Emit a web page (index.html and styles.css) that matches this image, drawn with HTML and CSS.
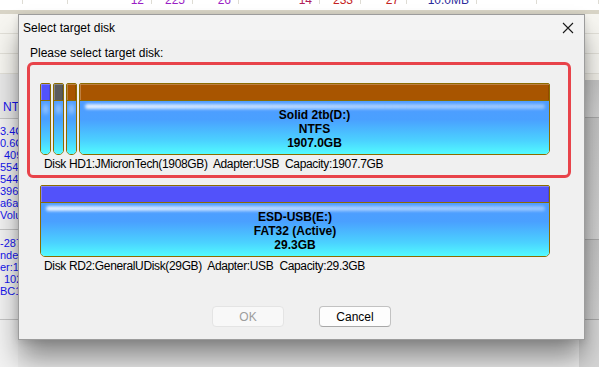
FILE: index.html
```html
<!DOCTYPE html>
<html>
<head>
  <meta charset="utf-8">
  <title>Select target disk</title>
  <link rel="stylesheet" href="styles.css">
</head>
<body>

<div class="app">
  <div class="top-grid">
    <div class="row row-cut">
      <span class="cell w23"></span>
      <span class="cell w45"></span>
      <span class="cell w84 c-purple">12</span>
      <span class="cell w41 c-purple">225</span>
      <span class="cell w46 c-purple">26</span>
      <span class="cell w81 c-wine">14</span>
      <span class="cell w41 c-red">233</span>
      <span class="cell w46 c-red">27</span>
      <span class="cell w70 c-navy">10.0MB</span>
      <span class="cell w60"></span>
      <span class="cell w62"></span>
    </div>
    <div class="band"></div>
    <div class="row"></div>
    <div class="row"></div>
    <div class="row"></div>
  </div>

  <div class="main">
    <div class="side">
      <div class="side-head">NTF</div>
      <div class="side-block">
        <div>3.4G</div>
        <div>0.6G</div>
        <div class="ind">409</div>
        <div>5543</div>
        <div>5446</div>
        <div>3961</div>
        <div>a6a-</div>
        <div>Volu</div>
      </div>
      <div class="side-block last">
        <div>-287</div>
        <div>nder</div>
        <div>er:14</div>
        <div class="ind">102</div>
        <div>BC1</div>
      </div>
    </div>
    <div class="middle"></div>
    <div class="strip">
      <div class="strip-top"></div>
      <div class="strip-part"></div>
      <div class="strip-part mid"></div>
      <div class="strip-part short"></div>
      <div class="strip-part rest"></div>
    </div>
  </div>
</div>

<!-- modal dialog on top of the app -->
<div class="dialog">
  <div class="titlebar">
    <span>Select target disk</span>
    <svg class="close" width="12" height="12" viewBox="0 0 12 12">
      <path d="M1 1 L11 11 M11 1 L1 11" stroke="#1a1a1a" stroke-width="1.1" fill="none"/>
    </svg>
  </div>

  <div class="dlg-body">
    <div class="label">Please select target disk:</div>

    <div class="disk selected">
      <div class="disk-bar">
        <div class="part narrow">
          <div class="cap cap-blue"></div>
          <div class="fill"></div>
        </div>
        <div class="part narrow">
          <div class="cap cap-gray"></div>
          <div class="fill"></div>
        </div>
        <div class="part narrow">
          <div class="cap cap-brown"></div>
          <div class="fill"></div>
        </div>
        <div class="part wide">
          <div class="cap cap-brown"></div>
          <div class="fill">
            <div class="part-text">
              <div>Solid 2tb(D:)</div>
              <div>NTFS</div>
              <div>1907.0GB</div>
            </div>
          </div>
        </div>
      </div>
      <div class="disk-info">Disk HD1:JMicronTech(1908GB)  Adapter:USB  Capacity:1907.7GB</div>
    </div>

    <div class="disk">
      <div class="disk-bar">
        <div class="part wide">
          <div class="cap cap-blue"></div>
          <div class="fill">
            <div class="part-text">
              <div>ESD-USB(E:)</div>
              <div>FAT32 (Active)</div>
              <div>29.3GB</div>
            </div>
          </div>
        </div>
      </div>
      <div class="disk-info">Disk RD2:GeneralUDisk(29GB)  Adapter:USB  Capacity:29.3GB</div>
    </div>

    <div class="buttons">
      <button class="btn" disabled>OK</button>
      <button class="btn">Cancel</button>
    </div>
  </div>
</div>

</body>
</html>
```

FILE: styles.css
```css
body {
  margin: 0;
  width: 599px;
  height: 367px;
  overflow: hidden;
  font-family: "Liberation Sans", Arial, sans-serif;
  font-size: 12px;
  background: #dcdcdc;
}

/* ---------- the app behind the dialog ---------- */

.app {
  display: flex;
  flex-direction: column;
  height: 367px;
}

.top-grid {
  background: #f7f6f1;
}

.row {
  display: flex;
  height: 19px;
  border-bottom: 1px solid #e2e0d8;
}

.row-cut {
  height: 10px;
  background: #fff;
  border-bottom: none;
  overflow: hidden;
}

.cell {
  box-sizing: border-box;
  height: 10px;
  border-right: 1px solid #dedcd4;
  text-align: right;
  padding-right: 7px;
  line-height: 12px;
  margin-top: -6px;
}

.w23 { width: 23px; }
.w41 { width: 41px; }
.w45 { width: 45px; }
.w46 { width: 46px; }
.w60 { width: 60px; }
.w62 { width: 62px; }
.w70 { width: 70px; }
.w81 { width: 81px; }
.w84 { width: 84px; }

.c-purple { color: #9a1ec4; }
.c-wine { color: #b0205a; }
.c-red { color: #c42020; }
.c-navy { color: #2a2a9a; }

.band {
  height: 4px;
  background: #d8d4c6;
}

.main {
  flex: 1;
  display: flex;
}

.side {
  width: 18px;
  overflow: hidden;
  white-space: nowrap;
  background: #f2f2f2;
  color: #1515ee;
  font-size: 11px;
  display: flex;
  flex-direction: column;
}

.side-head {
  height: 40px;
  display: flex;
  align-items: flex-end;
  padding: 0 0 4px 3px;
  background: #e9e9e9;
  border-bottom: 1px solid #c4c4c4;
  line-height: 14px;
  font-size: 12px;
}

.side-block {
  padding: 6px 0 8px 0;
  line-height: 12px;
  border-bottom: 1px solid #c4c4c4;
}

.side-block.last {
  padding: 7px 0 22px 0;
}

.ind {
  padding-left: 4px;
}

.middle {
  flex: 1;
  background: #ececec;
}

.strip {
  width: 20px;
  display: flex;
  flex-direction: column;
  background: #cfcfcf;
}

.strip-top {
  height: 6px;
  background: #f1efe8;
}

.strip-part {
  height: 37px;
  border-bottom: 1px solid #a8a8a8;
  background: linear-gradient(#c4c4c4, #d2d2d2);
}

.strip-part.mid {
  height: 121px;
}

.strip-part.short {
  height: 79px;
}

.strip-part.rest {
  flex: 1;
  border-bottom: none;
  background: #d6d6d6;
}

/* ---------- dialog ---------- */

.dialog {
  position: absolute;
  left: 18px;
  top: 14px;
  width: 567px;
  height: 326px;
  box-sizing: border-box;
  border: 1px solid #9c9c9c;
  background: #f0f0f0;
  display: flex;
  flex-direction: column;
  color: #000;
  box-shadow: 0 20px 26px -2px rgba(0, 0, 0, 0.42), 0 2px 8px rgba(0, 0, 0, 0.12);
}

.titlebar {
  height: 25px;
  display: flex;
  align-items: center;
  justify-content: space-between;
  padding: 0 10px 0 4px;
  background: #f3f3f3;
}

.close {
  display: block;
}

.dlg-body {
  flex: 1;
  display: flex;
  flex-direction: column;
  padding: 6px 0 12px 8px;
}

.label {
  line-height: 15px;
  padding-left: 3px;
  margin-bottom: 1px;
}

.disk {
  width: 544px;
  box-sizing: border-box;
  padding: 0 0 0 13px;
  margin-top: 7px;
}

.disk.selected {
  margin-top: 0;
  border: 3px solid #e8434a;
  border-radius: 6px;
  padding: 18px 18px 3px 10px;
}

.disk-bar {
  display: flex;
  gap: 2px;
  height: 72px;
  width: 510px;
}

.part {
  box-sizing: border-box;
  display: flex;
  flex-direction: column;
  border: 1px solid #8c6c00;
  border-radius: 2px 2px 5px 5px;
  overflow: hidden;
}

.part.narrow {
  width: 11px;
}

.part.wide {
  flex: 1;
}

.cap {
  height: 16px;
  border-bottom: 1px solid #8c6c00;
  box-shadow: inset 1px 1px 0 rgba(255, 255, 255, 0.25), inset -1px 0 0 rgba(0, 0, 0, 0.12);
}

.cap-blue { background: #5252fa; }
.cap-gray { background: #5c5c5c; }
.cap-brown { background: #a85500; }

.fill {
  flex: 1;
  position: relative;
  display: flex;
  align-items: center;
  justify-content: center;
  background: linear-gradient(#4f9cff 0%, #4aa0ff 35%, #4bd2ff 75%, #52fbff 100%);
}

/* soft glossy streak under the cap */
.fill::before {
  content: "";
  position: absolute;
  left: 5px;
  right: 4px;
  top: 3px;
  height: 5px;
  border-radius: 3px;
  background: linear-gradient(to right, rgba(255, 255, 255, 0.85), rgba(255, 255, 255, 0.5) 60%, rgba(255, 255, 255, 0.4));
  filter: blur(1.8px);
}

.narrow .fill::before {
  left: 2px;
  right: 2px;
  top: 3px;
  height: 10px;
  border-radius: 50%;
  background: rgba(255, 255, 255, 0.45);
  filter: blur(2px);
}

.part-text {
  position: relative;
  text-align: center;
  font-weight: bold;
  line-height: 14px;
  margin-top: 2px;
}

.disk-info {
  white-space: pre;
  line-height: 16px;
  margin-top: 1px;
  padding-left: 4px;
  letter-spacing: -0.35px;
}

.buttons {
  margin-top: auto;
  display: flex;
  justify-content: center;
  gap: 35px;
  padding-right: 8px;
}

.btn {
  width: 72px;
  height: 21px;
  padding: 0;
  font-family: "Liberation Sans", Arial, sans-serif;
  font-size: 12px;
  color: #000;
  background: #fdfdfd;
  border: 1px solid #c2c2c2;
  border-bottom-color: #a8a8a8;
  border-radius: 4px;
}

.btn:disabled {
  color: #9d9d9d;
  background: #f8f8f8;
  border-color: #e4e4e4;
}
```
